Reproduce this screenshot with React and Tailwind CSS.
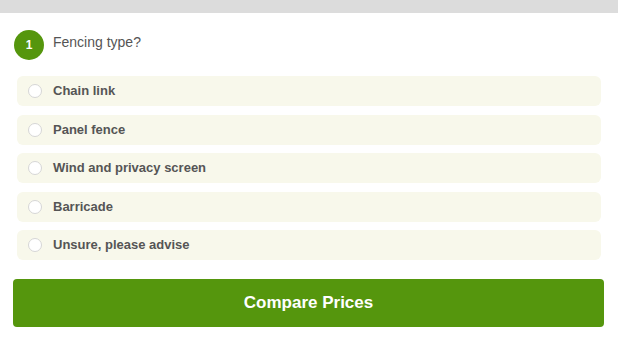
const options = ['Chain link', 'Panel fence', 'Wind and privacy screen', 'Barricade', 'Unsure, please advise'];

export default function App() {
  return (
    <div className="w-[618px] h-[341px] bg-white font-['Liberation_Sans',Arial,sans-serif]">
      <div className="h-[13px] bg-[#dcdcdc]" />
      <div className="flex items-center mt-[17px] ml-[14px]">
        <div className="w-[30px] h-[30px] rounded-full bg-[#55960d] text-white text-[12px] font-bold flex items-center justify-center">1</div>
        <div className="ml-[9px] -mt-[5px] text-[14px] text-[#555]">Fencing type?</div>
      </div>
      <div className="mt-[16px] mx-[17px] flex flex-col gap-[8.5px]">
        {options.map((o) => (
          <label key={o} className="h-[30px] rounded-[6px] bg-[#f8f8eb] flex items-center pl-[11px] cursor-pointer">
            <span className="w-[14px] h-[14px] rounded-full border border-[#d6d6d6] bg-white" />
            <span className="ml-[11px] text-[13px] font-bold text-[#555]">{o}</span>
          </label>
        ))}
      </div>
      <button className="mt-[19px] ml-[13px] w-[591px] h-[48px] rounded-[4px] bg-[#55960d] text-white text-[17px] font-bold">
        Compare Prices
      </button>
    </div>
  );
}
